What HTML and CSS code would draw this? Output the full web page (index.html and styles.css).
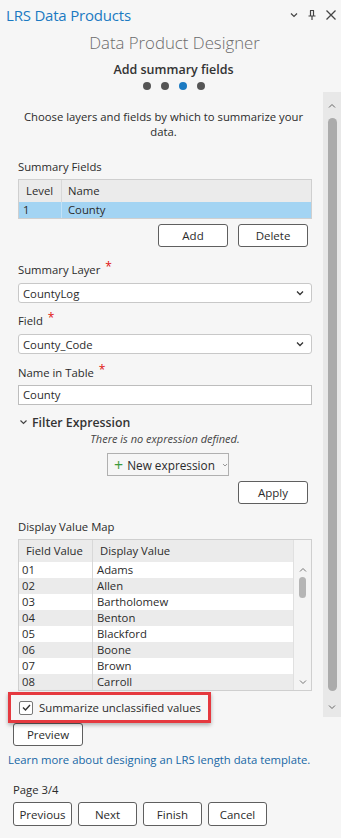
FILE: index.html
```html
<!DOCTYPE html>
<html>
<head>
<meta charset="utf-8">
<link rel="stylesheet" href="styles.css">
</head>
<body>
<div class="pane">
  <div class="titlebar">
    <span class="title">LRS Data Products</span>
    <div class="win-icons">
      <svg width="10" height="10" viewBox="0 0 10 10"><path d="M2 3.5 L5 6.5 L8 3.5" fill="none" stroke="#444" stroke-width="1.2"/></svg>
      <svg width="10" height="12" viewBox="0 0 10 12"><path d="M3 1.5 H7 M3.5 1.5 V7 M6.5 1.5 V7 M1.5 7 H8.5 M5 7 V11" fill="none" stroke="#444" stroke-width="1.2"/></svg>
      <svg width="12" height="12" viewBox="0 0 12 12"><path d="M1.5 1.5 L10.5 10.5 M10.5 1.5 L1.5 10.5" fill="none" stroke="#444" stroke-width="1.3"/></svg>
    </div>
  </div>
  <div class="designer">Data Product Designer</div>
  <div class="step">Add summary fields</div>
  <div class="dots"><span class="dot"></span><span class="dot"></span><span class="dot active"></span><span class="dot"></span></div>

  <div class="main">
    <div class="content">
      <p class="desc">Choose layers and fields by which to summarize your data.</p>

      <div class="label first">Summary Fields</div>
      <div class="grid sf">
        <div class="row head"><div class="c1">Level</div><div class="c2">Name</div></div>
        <div class="row sel"><div class="c1">1</div><div class="c2">County</div></div>
      </div>
      <div class="btnrow right">
        <button class="btn">Add</button>
        <button class="btn">Delete</button>
      </div>

      <div class="label l-layer">Summary Layer <span class="req">*</span></div>
      <div class="select"><span>CountyLog</span><svg width="10" height="8" viewBox="0 0 10 8"><path d="M2 2.5 L5 5.5 L8 2.5" fill="none" stroke="#333" stroke-width="1.3"/></svg></div>

      <div class="label l-field">Field <span class="req">*</span></div>
      <div class="select"><span>County_Code</span><svg width="10" height="8" viewBox="0 0 10 8"><path d="M2 2.5 L5 5.5 L8 2.5" fill="none" stroke="#333" stroke-width="1.3"/></svg></div>

      <div class="label l-name">Name in Table <span class="req">*</span></div>
      <div class="textbox">County</div>

      <div class="filter-head"><svg width="9" height="8" viewBox="0 0 9 8"><path d="M1.5 2.5 L4.5 5.5 L7.5 2.5" fill="none" stroke="#444" stroke-width="1.2"/></svg><span>Filter Expression</span></div>
      <div class="noexpr">There is no expression defined.</div>
      <div class="center-row">
        <div class="newexpr"><span class="plus">+</span><span>New expression</span><svg width="9" height="8" viewBox="0 0 9 8"><path d="M1.5 2.5 L4.5 5.5 L7.5 2.5" fill="none" stroke="#666" stroke-width="1"/></svg></div>
      </div>
      <div class="btnrow right apply">
        <button class="btn">Apply</button>
      </div>

      <div class="label l-dvm">Display Value Map</div>
      <div class="dvm">
        <div class="dvm-rows">
          <div class="row head"><div class="d1">Field Value</div><div class="d2">Display Value</div></div>
          <div class="row"><div class="d1">01</div><div class="d2">Adams</div></div>
          <div class="row alt"><div class="d1">02</div><div class="d2">Allen</div></div>
          <div class="row"><div class="d1">03</div><div class="d2">Bartholomew</div></div>
          <div class="row alt"><div class="d1">04</div><div class="d2">Benton</div></div>
          <div class="row"><div class="d1">05</div><div class="d2">Blackford</div></div>
          <div class="row alt"><div class="d1">06</div><div class="d2">Boone</div></div>
          <div class="row"><div class="d1">07</div><div class="d2">Brown</div></div>
          <div class="row alt"><div class="d1">08</div><div class="d2">Carroll</div></div>
        </div>
        <div class="mini-scroll">
          <div class="ms-head"></div>
          <svg class="ms-arrow" width="10" height="8" viewBox="0 0 10 8"><path d="M2 5.5 L5 2.5 L8 5.5" fill="none" stroke="#777" stroke-width="1"/></svg>
          <div class="ms-thumb"></div>
          <div class="ms-fill"></div>
          <svg class="ms-arrow" width="10" height="8" viewBox="0 0 10 8"><path d="M2 2.5 L5 5.5 L8 2.5" fill="none" stroke="#777" stroke-width="1"/></svg>
        </div>
      </div>

      <div class="highlight">
        <span class="check"><svg width="11" height="11" viewBox="0 0 11 11"><path d="M2 5.5 L4.5 8 L9 3" fill="none" stroke="#333" stroke-width="1.4"/></svg></span>
        <span>Summarize unclassified values</span>
      </div>

      <div class="btnrow preview">
        <button class="btn">Preview</button>
      </div>

      <a class="learn">Learn more about designing an LRS length data template.</a>

      <div class="page">Page 3/4</div>
      <div class="btnrow nav">
        <button class="btn">Previous</button>
        <button class="btn">Next</button>
        <button class="btn">Finish</button>
        <button class="btn">Cancel</button>
      </div>
    </div>
    <div class="vscroll">
      <svg class="vs-arrow" width="10" height="8" viewBox="0 0 10 8"><path d="M2 5.5 L5 2.5 L8 5.5" fill="none" stroke="#666" stroke-width="1"/></svg>
      <div class="vs-thumb"></div>
      <svg class="vs-arrow" width="10" height="8" viewBox="0 0 10 8"><path d="M2 2.5 L5 5.5 L8 2.5" fill="none" stroke="#666" stroke-width="1"/></svg>
    </div>
  </div>
</div>
</body>
</html>
```

FILE: styles.css
```css
* { box-sizing: border-box; }
html, body { margin: 0; padding: 0; }
body {
  background: #f6f6f6;
  font-family: "Open Sans", "Noto Sans", sans-serif;
  font-size: 11.3px;
  color: #2b2b2b;
  width: 341px;
  height: 838px;
  overflow: hidden;
}
.pane { width: 341px; }

.titlebar {
  height: 30px;
  display: flex;
  align-items: center;
  justify-content: space-between;
  padding: 0 4px 0 6px;
}
.title { color: #1b7ac2; font-size: 15px; letter-spacing: -0.2px; }
.win-icons { display: flex; align-items: center; gap: 8px; }

.designer {
  height: 25px;
  line-height: 25px;
  text-align: center;
  font-size: 16.8px;
  font-weight: 300;
  color: #6b6b6b;
  padding-left: 8px;
}
.step {
  height: 20px;
  line-height: 20px;
  margin-top: 5px;
  text-align: center;
  font-size: 12.5px;
  font-weight: 600;
  color: #333;
  padding-left: 6px;
}
.dots {
  height: 12px;
  display: flex;
  justify-content: center;
  align-items: center;
  gap: 10px;
  padding-left: 6px;
}
.dot { width: 8px; height: 8px; border-radius: 50%; background: #555; }
.dot.active { background: #1b7ac2; }

.main {
  display: grid;
  grid-template-columns: 323px 18px;
  margin-top: 0;
}
.content { display: flex; flex-direction: column; }

.desc {
  margin: 17px 18px 0 22px;
  line-height: 15px;
  text-align: center;
}

.label {
  margin-left: 18px;
  line-height: 16px;
  height: 16px;
}
.label.first { margin-top: 20px; }
.l-layer { margin-top: 15px; }
.l-field { margin-top: 10px; }
.l-name { margin-top: 11px; }
.l-dvm { margin-top: 15px; }
.req { color: #e01010; font-size: 12px; position: relative; top: -3px; margin-left: 2px; }

.grid {
  margin: 4px 0 0 18px;
  width: 294px;
  border: 1px solid #cfcfcf;
  background: #fff;
}
.row { display: flex; height: 16px; line-height: 16px; }
.row.head { height: 22px; line-height: 22px; background: #ebebeb; }
.sf .c1 { width: 43px; padding-left: 4px; border-right: 1px solid #d8d8d8; }
.sf .c2 { flex: 1; padding-left: 6px; }
.sf .row.head .c1 { padding-left: 7px; }
.row.sel { background: #a3d4f3; }
.row.sel .c1 { border-right-color: #c2e2f7; }

.btnrow { display: flex; gap: 10px; }
.btnrow.right { justify-content: flex-end; padding-right: 15px; margin-top: 5px; }
.btn {
  font-family: inherit;
  font-size: 11.5px;
  color: #2b2b2b;
  height: 23px;
  width: 70px;
  background: #fff;
  border: 1px solid #5f5f5f;
  border-radius: 3px;
  padding: 0;
}

.select {
  margin: 5px 0 0 18px;
  width: 294px;
  height: 20px;
  background: #fff;
  border: 1px solid #c8c8c8;
  border-radius: 3px;
  display: flex;
  align-items: center;
  justify-content: space-between;
  padding: 0 6px 0 4px;
}
.textbox {
  margin: 4px 0 0 18px;
  width: 294px;
  height: 20px;
  line-height: 18px;
  background: #fff;
  border: 1px solid #bdbdbd;
  padding-left: 4px;
}

.filter-head {
  margin: 9px 0 0 19px;
  height: 16px;
  display: flex;
  align-items: center;
  gap: 4px;
  font-size: 12.3px;
  font-weight: 600;
  color: #333;
}
.noexpr {
  margin-top: 1px;
  height: 16px;
  line-height: 16px;
  text-align: center;
  font-style: italic;
  font-size: 11px;
  color: #444;
  padding-left: 7px;
}
.center-row { display: flex; justify-content: center; margin-top: 6px; padding-left: 13px; }
.newexpr {
  height: 23px;
  width: 122px;
  border: 1px solid #b0b0b0;
  background: #f6f6f6;
  display: flex;
  align-items: center;
  gap: 4px;
  padding-left: 6px;
  font-size: 11.8px;
  white-space: nowrap;
}
.newexpr svg { margin-left: 3px; }
.plus { color: #3d9a3d; font-size: 16px; font-weight: 400; line-height: 1; }
.btnrow.apply { margin-top: 5px; }

.dvm {
  margin: 4px 0 0 18px;
  width: 294px;
  height: 152px;
  border: 1px solid #cfcfcf;
  display: flex;
  background: #fff;
}
.dvm-rows { flex: 1; }
.dvm .row { background: #fff; }
.dvm .row.alt { background: #ebebeb; }
.dvm .row.head { background: #ebebeb; }
.d1 { width: 74px; padding-left: 3px; border-right: 1px solid #d8d8d8; }
.d2 { flex: 1; padding-left: 4px; }
.dvm .row.head .d1 { padding-left: 7px; }
.dvm .row.head .d2 { padding-left: 7px; }
.mini-scroll {
  width: 18px;
  background: #f4f4f4;
  border-left: 1px solid #e0e0e0;
  display: flex;
  flex-direction: column;
  align-items: center;
}
.ms-head { height: 22px; width: 100%; background: #f4f4f4; }
.ms-arrow { margin-top: 4px; }
.ms-thumb { width: 7px; height: 21px; border-radius: 4px; background: #b5b5b5; margin-top: 3px; }
.ms-fill { flex: 1; }
.mini-scroll .ms-arrow:last-child { margin: 0 0 4px 0; }

.highlight {
  margin: 1px 0 -5px 8px;
  width: 203px;
  height: 31px;
  border: 3px solid #e5393f;
  display: flex;
  align-items: center;
  gap: 6px;
  padding-left: 8px;
  font-size: 11.4px;
  white-space: nowrap;
  box-shadow: 0 2px 4px rgba(0,0,0,0.3);
  position: relative;
  background: #f6f6f6;
}
.check {
  width: 14px; height: 14px;
  border: 1px solid #777;
  border-radius: 2px;
  background: #fff;
  display: flex; align-items: center; justify-content: center;
}

.btnrow.preview { margin: 5px 0 0 13px; }
.learn {
  margin: 6px 0 0 8px;
  height: 16px;
  line-height: 16px;
  color: #1667a5;
  white-space: nowrap;
}
.page { margin: 14px 0 0 13px; height: 16px; line-height: 16px; }
.btnrow.nav { margin: 4px 0 0 13px; gap: 6px; }
.btnrow.nav .btn { width: 59px; height: 24px; }

.vscroll {
  align-self: start;
  height: 625px;
  background: #e8e8e8;
  display: flex;
  flex-direction: column;
  align-items: center;
  padding: 10px 0 6px 0;
}
.vs-thumb { flex: 1; width: 9px; background: #ababab; border-radius: 5px; margin: 8px 0 12px 0; }
```
